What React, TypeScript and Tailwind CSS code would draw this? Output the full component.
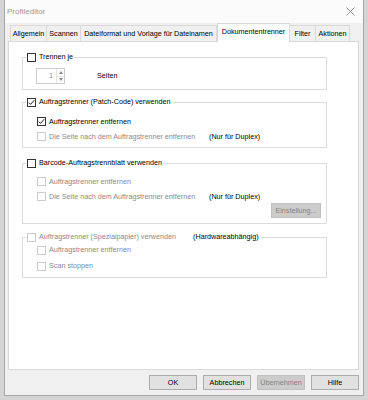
import React from 'react';

const Check = ({ checked = false, disabled = false }: { checked?: boolean; disabled?: boolean }) => (
  <span
    className={`flex h-[9px] w-[9px] shrink-0 items-center justify-center border bg-white ${
      disabled ? 'border-[#cccccc]' : 'border-[#333333]'
    }`}
  >
    {checked && (
      <svg width="7" height="7" viewBox="0 0 7 7">
        <polyline points="0.8,3.6 2.6,5.4 6.2,1.2" fill="none" stroke="#222" strokeWidth="1" />
      </svg>
    )}
  </span>
);

const Row = ({
  label,
  checked = false,
  disabled = false,
  note,
  className = 'h-[15px]',
}: {
  label: string;
  checked?: boolean;
  disabled?: boolean;
  note?: string;
  className?: string;
}) => (
  <div className={`flex items-center pl-[14px] ${className}`}>
    <div className="flex w-[172px] items-center gap-[3px]">
      <Check checked={checked} disabled={disabled} />
      <span className={disabled ? 'text-[#8a8a8a]' : 'text-black'}>{label}</span>
    </div>
    {note && <span className="text-black">{note}</span>}
  </div>
);

const Legend = ({ label, checked = false, disabled = false, extra }: { label: string; checked?: boolean; disabled?: boolean; extra?: string }) => (
  <legend className="ml-[3px] flex h-[10px] items-center gap-[3px] px-px">
    <Check checked={checked} disabled={disabled} />
    <span className={disabled ? 'text-[#8a8a8a]' : 'text-black'}>{label}</span>
    {extra && <span className="ml-[14px] pr-px text-black">{extra}</span>}
  </legend>
);

const Button = ({ label, disabled = false }: { label: string; disabled?: boolean }) => (
  <div
    className={`flex h-[15px] w-[48px] items-center justify-center border ${
      disabled ? 'border-[#bfbfbf] bg-[#cccccc] text-[#838383]' : 'border-[#adadad] bg-[#e1e1e1] text-black'
    }`}
  >
    {label}
  </div>
);

const tabs = [
  { label: 'Allgemein', w: 'w-[37px]' },
  { label: 'Scannen', w: 'w-[35px]' },
  { label: 'Dateiformat und Vorlage für Dateinamen', w: 'w-[137px]' },
  { label: 'Dokumententrenner', w: 'w-[73px]', active: true },
  { label: 'Filter', w: 'w-[27px]' },
  { label: 'Aktionen', w: 'w-[35px]' },
];

export default function App() {
  return (
    <div className="h-[400px] w-[368px] bg-[#d4d4d4] pl-[4px] font-['Liberation_Sans',Arial,sans-serif] text-[7.2px] leading-none">
      <div className="flex h-[396px] w-[360px] flex-col border-x border-b border-[#a8a8a8] bg-[#f0f0f0]">
        <div className="flex h-[23px] items-center justify-between bg-[#fbfbfb] pl-[2px] pr-[8px]">
          <span className="text-[8px] text-[#9a9a9a]">Profileditor</span>
          <svg width="9" height="9" viewBox="0 0 9 9">
            <path d="M0.5 0.5 L8.5 8.5 M8.5 0.5 L0.5 8.5" stroke="#8a8a8a" strokeWidth="0.9" />
          </svg>
        </div>

        <div className="flex flex-1 flex-col pl-[3px] pr-[4px]">
          <div className="flex h-[18px] items-end pl-[2px]">
            {tabs.map((t) =>
              t.active ? (
                <div
                  key={t.label}
                  className={`relative z-10 -mb-px flex h-[19px] items-start justify-center border-x border-t border-[#d9d9d9] bg-white pt-[4px] ${t.w}`}
                >
                  {t.label}
                </div>
              ) : (
                <div
                  key={t.label}
                  className={`-ml-px flex h-[16px] items-center justify-center border border-b-0 border-[#d9d9d9] bg-[#f0f0f0] first:ml-0 ${t.w}`}
                >
                  {t.label}
                </div>
              )
            )}
          </div>

          <div className="flex h-[329px] flex-col border border-[#d9d9d9] bg-white pl-[13px] pt-[10px]">
            <fieldset className="h-[38px] w-[305px] border border-[#dcdcdc] p-0">
              <Legend label="Trennen je" />
              <div className="mt-[6px] flex items-center pl-[13px]">
                <div className="flex h-[16px] w-[29px] border border-[#cccccc]">
                  <span className="flex flex-1 items-center justify-end pr-[3px] text-[#8a8a8a]">1</span>
                  <div className="flex w-[8px] flex-col border-l border-[#e3e3e3]">
                    <div className="flex flex-1 items-center justify-center border-b border-[#e3e3e3]">
                      <svg width="4" height="3" viewBox="0 0 4 3">
                        <path d="M0 3 L2 0 L4 3 Z" fill="#8a8a8a" />
                      </svg>
                    </div>
                    <div className="flex flex-1 items-center justify-center">
                      <svg width="4" height="3" viewBox="0 0 4 3">
                        <path d="M0 0 L2 3 L4 0 Z" fill="#8a8a8a" />
                      </svg>
                    </div>
                  </div>
                </div>
                <span className="ml-[32px]">Seiten</span>
              </div>
            </fieldset>

            <fieldset className="mt-[7px] h-[51px] w-[305px] border border-[#dcdcdc] p-0">
              <Legend label="Auftragstrenner (Patch-Code) verwenden" checked />
              <Row label="Auftragstrenner entfernen" checked className="mt-[7px] h-[15px]" />
              <Row label="Die Seite nach dem Auftragstrenner entfernen" disabled note="(Nur für Duplex)" />
            </fieldset>

            <fieldset className="mt-[10px] h-[66px] w-[305px] border border-[#dcdcdc] p-0">
              <Legend label="Barcode-Auftragstrennblatt verwenden" />
              <Row label="Auftragstrenner entfernen" disabled className="mt-[6px] h-[15px]" />
              <Row label="Die Seite nach dem Auftragstrenner entfernen" disabled note="(Nur für Duplex)" />
              <div className="-mt-px flex justify-end pr-[5px]">
                <div className="flex h-[15px] w-[50px] items-center justify-center border border-[#bfbfbf] bg-[#cccccc] text-[#838383]">
                  Einstellung...
                </div>
              </div>
            </fieldset>

            <fieldset className="mt-[8px] h-[46px] w-[305px] border border-[#dcdcdc] p-0">
              <Legend label="Auftragstrenner (Spezialpapier) verwenden" disabled extra="(Hardwareabhängig)" />
              <Row label="Auftragstrenner entfernen" disabled className="h-[16px]" />
              <Row label="Scan stoppen" disabled className="h-[16px]" />
            </fieldset>
          </div>

          <div className="mt-[5px] flex justify-end gap-[6px]">
            <Button label="OK" />
            <Button label="Abbrechen" />
            <Button label="Übernehmen" disabled />
            <Button label="Hilfe" />
          </div>
        </div>
      </div>
    </div>
  );
}
